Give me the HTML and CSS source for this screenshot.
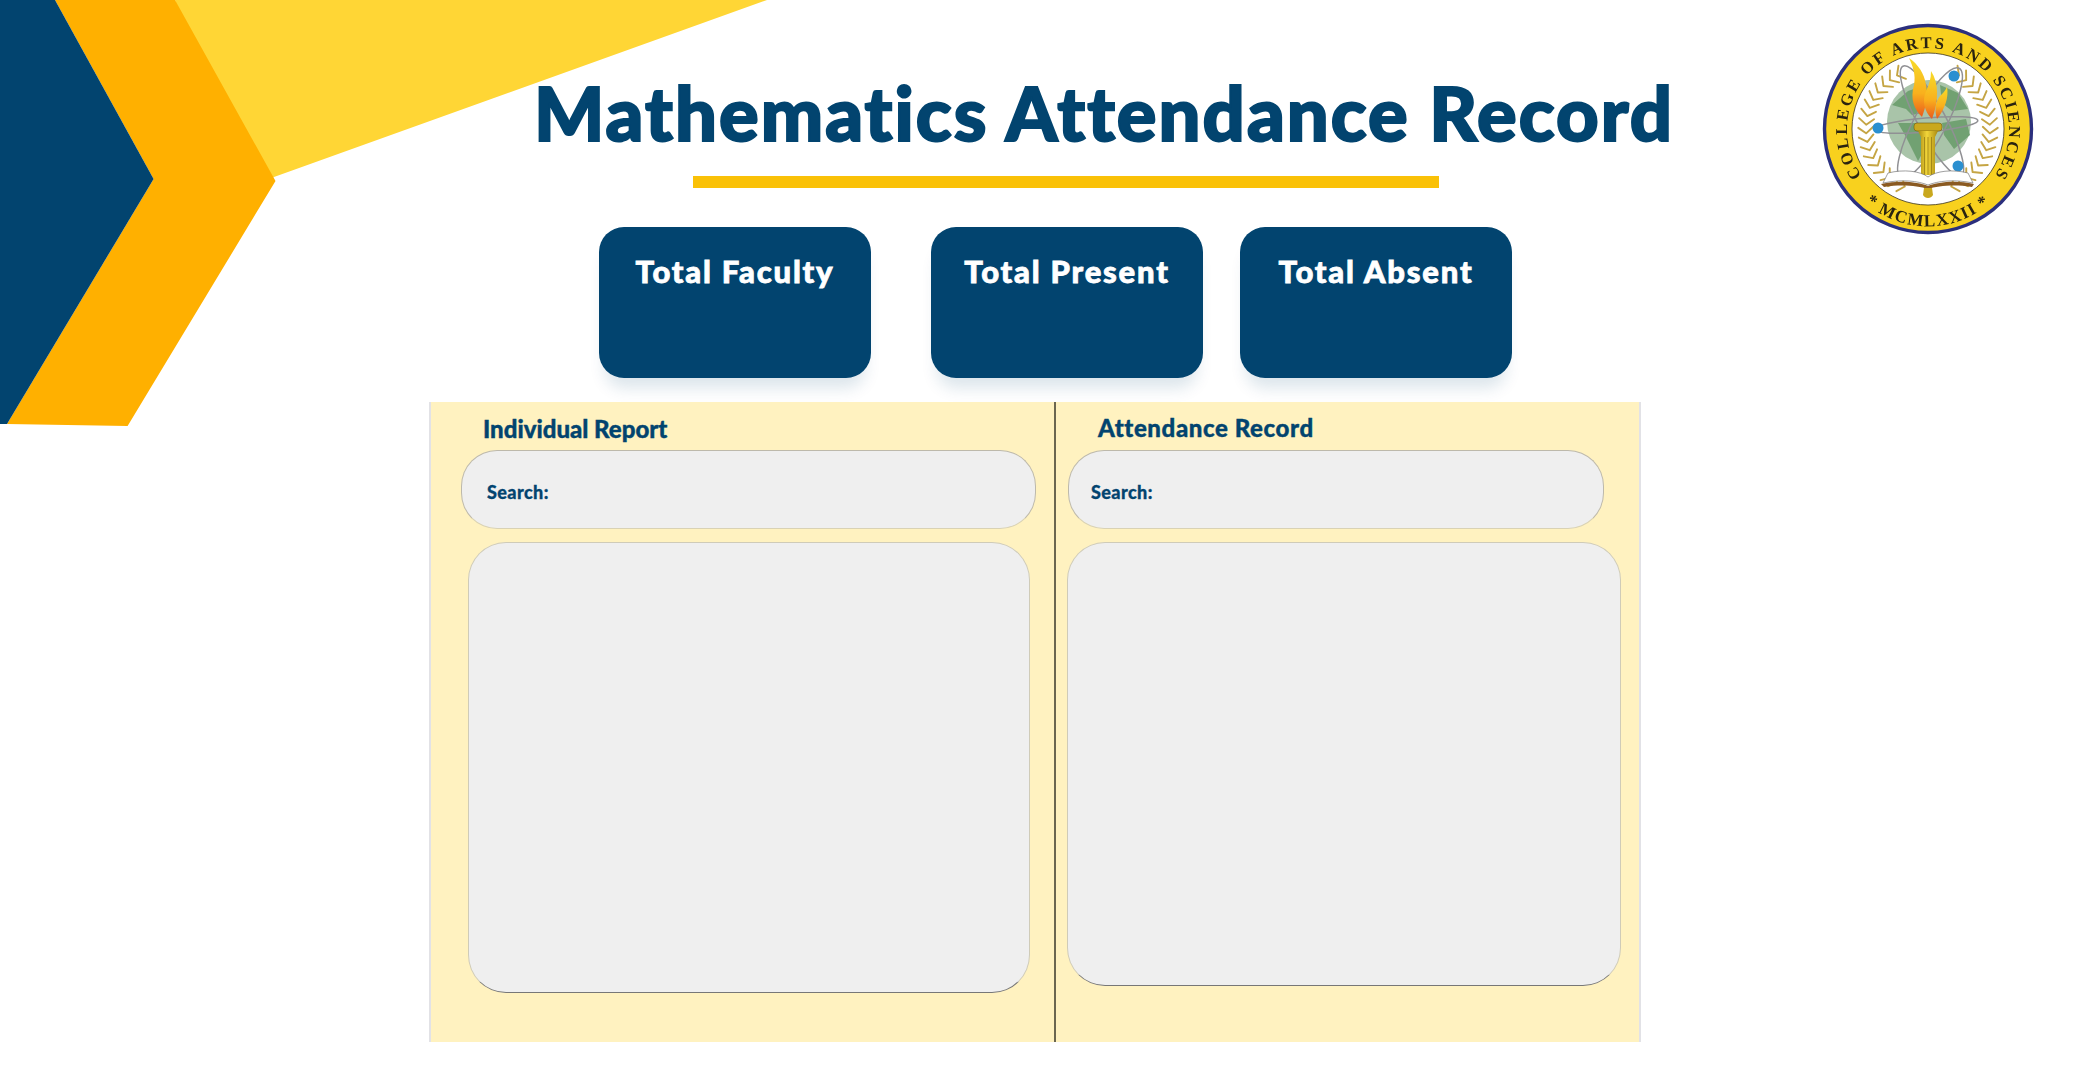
FILE: index.html
```html
<!DOCTYPE html>
<html lang="en">
<head>
<meta charset="utf-8">
<title>Mathematics Attendance Record</title>
<link rel="stylesheet" href="styles.css">
</head>
<body>
<div class="page">
  <svg class="decor" width="800" height="440" viewBox="0 0 800 440" aria-hidden="true">
    <polygon fill="#ffd635" points="175,0 767,0 274,177 240,200"/>
    <polygon fill="#ffb000" points="55,0 175,0 275.5,181 127.6,426 7,424 153.6,179"/>
    <polygon fill="#02446f" points="0,0 55,0 153.6,179 7,424 0,424"/>
  </svg>

  <svg class="logo" width="220" height="220" viewBox="-110 -110 220 220" role="img" aria-label="College of Arts and Sciences seal">
    <defs>
      <path id="arcTop" d="M -66.4 46.5 A 81 81 0 1 1 66.4 46.5"/>
      <path id="arcBottom" d="M -70 66 A 94 94 0 0 0 70 66"/>
      <linearGradient id="flame" x1="0" y1="0" x2="0" y2="1">
        <stop offset="0" stop-color="#f7dc2a"/>
        <stop offset=".6" stop-color="#f9b01d"/>
        <stop offset="1" stop-color="#ea5a1c"/>
      </linearGradient>
      <linearGradient id="gold" x1="0" y1="0" x2="1" y2="0">
        <stop offset="0" stop-color="#a98a12"/>
        <stop offset=".45" stop-color="#f2d63a"/>
        <stop offset="1" stop-color="#a98a12"/>
      </linearGradient>
      <path id="leaf" d="M0 -62 L-6 -69.5 M0 -62 L-6 -54.5"/>
      <g id="wing" fill="none" stroke="#c5a544" stroke-width="1.9" stroke-linecap="round">
        <use href="#leaf" transform="rotate(30)"/>
        <use href="#leaf" transform="rotate(38)"/>
        <use href="#leaf" transform="rotate(46)"/>
        <use href="#leaf" transform="rotate(54)"/>
        <use href="#leaf" transform="rotate(62)"/>
        <use href="#leaf" transform="rotate(70)"/>
        <use href="#leaf" transform="rotate(78)"/>
        <use href="#leaf" transform="rotate(86)"/>
        <use href="#leaf" transform="rotate(94)"/>
        <use href="#leaf" transform="rotate(102)"/>
        <use href="#leaf" transform="rotate(110)"/>
        <use href="#leaf" transform="rotate(118)"/>
        <use href="#leaf" transform="rotate(126)"/>
        <use href="#leaf" transform="rotate(134)"/>
        <use href="#leaf" transform="rotate(142)"/>
        <use href="#leaf" transform="rotate(150)"/>
        <use href="#leaf" transform="rotate(158)"/>
      </g>
    </defs>
    <circle r="103.5" fill="#f8d11e" stroke="#2b2f7d" stroke-width="3.4"/>
    <circle r="76" fill="#fff" stroke="#3a3420" stroke-width=".8"/>
    <text class="seal-text"><textPath href="#arcTop" textLength="352" lengthAdjust="spacing">COLLEGE OF ARTS AND SCIENCES</textPath></text>
    <text class="seal-text seal-mid"><textPath href="#arcBottom" startOffset="50%">* MCMLXXII *</textPath></text>
    <use href="#wing"/>
    <use href="#wing" transform="scale(-1 1)"/>
    <circle cx="1" cy="-7" r="42" fill="#a9c4a9"/>
    <path fill="#71a172" d="M-36 -24 L-20 -38 L-2 -44 L6 -34 L-4 -26 L-6 -16 L-16 -14 L-22 -20 Z M-30 -6 L-8 -6 L2 4 L-2 18 L-10 32 L-14 24 L-22 8 Z M12 -44 L30 -36 L40 -20 L24 -18 L14 -26 Z M14 -6 L38 -10 L42 6 L26 20 L16 6 Z"/>
    <g fill="none" stroke="#909094" stroke-width="1.5">
      <ellipse cx="-2" cy="-4" rx="52" ry="7" transform="rotate(-5 -2 -4)"/>
      <ellipse cx="4" cy="-8" rx="62" ry="14" transform="rotate(62 4 -8)"/>
      <ellipse cx="2" cy="-6" rx="62" ry="16" transform="rotate(-62 2 -6)"/>
    </g>
    <circle cx="26" cy="-53" r="5.5" fill="#2a8fd0"/>
    <circle cx="-50" cy="-1" r="5.5" fill="#2a8fd0"/>
    <circle cx="30" cy="37" r="5.5" fill="#2a8fd0"/>
    <path fill="url(#flame)" d="M-19 -71 C0 -58 3 -34 -6 -12 C-14 -20 -18 -30 -14 -44 C-12 -54 -15 -62 -19 -71 Z"/>
    <path fill="url(#flame)" d="M3 -58 C11 -46 11 -28 4 -10 C-4 -18 -6 -28 -2 -38 C1 -44 3 -50 3 -58 Z"/>
    <path fill="url(#flame)" d="M19 -42 C21 -32 17 -20 9 -10 C6 -20 8 -28 12 -33 C15 -36 17 -38 19 -42 Z"/>
    <rect x="-14" y="-6" width="28" height="8" rx="3" fill="#c9a81e" stroke="#6e5a10" stroke-width=".6"/>
    <path fill="url(#gold)" d="M-10 2 H10 L7 8 V46 H-7 V8 Z"/>
    <path stroke="#8e7412" stroke-width=".7" d="M-3.5 8 V46 M0 8 V46 M3.5 8 V46"/>
    <path fill="#fff" stroke="#777" stroke-width=".7" d="M-40 44 C-24 40 -8 42 0 48 C8 42 24 40 40 44 L45 54 C26 50 10 52 0 56 C-10 52 -26 50 -45 54 Z"/>
    <path fill="#8a5a22" d="M-47 55 C-28 51 -10 53 0 57 C10 53 28 51 46 55 L44 58 C26 55 10 57 0 60 C-10 57 -26 55 -44 58 Z"/>
    <path fill="#c9a81e" d="M-4 59 H4 L5 66 C3 70 -3 70 -5 66 Z"/>
  </svg>

  <main class="content">
    <h1 class="title">Mathematics Attendance Record</h1>
    <div class="rule"></div>
    <section class="stats">
      <div class="stat stat-faculty">Total Faculty</div>
      <div class="stat stat-present">Total Present</div>
      <div class="stat stat-absent">Total Absent</div>
    </section>
    <section class="panel">
      <div class="pane pane-left">
        <h2 class="pane-title">Individual Report</h2>
        <div class="search"><label class="search-label">Search:</label></div>
        <div class="list"></div>
      </div>
      <div class="pane pane-right">
        <h2 class="pane-title">Attendance Record</h2>
        <div class="search"><label class="search-label">Search:</label></div>
        <div class="list"></div>
      </div>
    </section>
  </main>
</div>
</body>
</html>
```

FILE: styles.css
```css
* { box-sizing: border-box; }

html, body {
  margin: 0;
  padding: 0;
  background: #fff;
}

body {
  font-family: Lato, "Open Sans", sans-serif;
  color: #02446f;
}

.page {
  position: relative;
  width: 2080px;
  height: 1080px;
  overflow: hidden;
}

.decor {
  position: absolute;
  left: 0;
  top: 0;
}

.logo {
  position: absolute;
  left: 1818px;
  top: 19px;
  filter: blur(0.4px);
}

.seal-text {
  font-family: "Liberation Serif", serif;
  font-weight: 700;
  font-size: 16.5px;
  fill: #2a2410;
}

.seal-mid {
  text-anchor: middle;
  font-size: 17px;
  letter-spacing: 1.5px;
}

.content {
  position: relative;
  display: flex;
  flex-direction: column;
  padding-left: 429px;
}

.title {
  margin: 72px 0 0 105px;
  font-size: 74px;
  line-height: 82px;
  font-weight: 900;
  letter-spacing: 2.05px;
  -webkit-text-stroke: 2px #02446f;
  white-space: nowrap;
}

.rule {
  width: 746px;
  height: 12px;
  margin: 22px 0 0 264px;
  background: #fac107;
}

.stats {
  display: flex;
  margin: 39px 0 0 170px;
}

.stat {
  width: 272px;
  height: 151px;
  padding-top: 25px;
  border-radius: 25px;
  background: #02446f;
  color: #fff;
  font-size: 31px;
  line-height: 38px;
  font-weight: 900;
  letter-spacing: 1.8px;
  -webkit-text-stroke: 0.8px #fff;
  text-align: center;
  box-shadow: 0 16px 16px -6px rgba(2, 68, 111, 0.14);
}

.stat-present { margin-left: 60px; }
.stat-absent { margin-left: 37px; }

.panel {
  display: grid;
  grid-template-columns: 625px 585px;
  width: 1212px;
  height: 640px;
  margin-top: 24px;
  background: #fff2c0;
  border-left: 2px solid #e2e2e6;
  border-right: 2px solid #e2e2e6;
}

.pane { min-width: 0; }

.pane-left {
  padding: 12px 0 0 30px;
  border-right: 2px solid #6b6650;
}

.pane-right {
  padding: 11px 0 0 11px;
}

.pane-title {
  margin: 0;
  font-size: 24px;
  line-height: 30px;
  font-weight: 900;
  -webkit-text-stroke: 0.4px #02446f;
}

.pane-left .pane-title { padding-left: 22px; }

.pane-right .pane-title {
  padding-left: 31px;
  letter-spacing: 0.6px;
}

.search {
  display: flex;
  align-items: center;
  height: 79px;
  border: 1px solid #bdb9ab;
  border-bottom-color: #d9d2b4;
  border-radius: 36px;
  background: #efefef;
  font-weight: 900;
}

.pane-left .search {
  width: 575px;
  margin-top: 6px;
  padding: 4px 0 0 25px;
}

.pane-right .search {
  width: 536px;
  margin: 7px 0 0 1px;
  padding: 4px 0 0 22px;
}

.search-label {
  font-size: 18px;
  line-height: 20px;
  letter-spacing: 0.4px;
  -webkit-text-stroke: 0.3px #02446f;
}

.list {
  border: 1px solid #cfcbb8;
  border-bottom-color: #777;
  border-radius: 38px;
  background: #efefef;
}

.pane-left .list {
  width: 562px;
  height: 451px;
  margin: 13px 0 0 7px;
}

.pane-right .list {
  width: 554px;
  height: 444px;
  margin-top: 13px;
}
```
